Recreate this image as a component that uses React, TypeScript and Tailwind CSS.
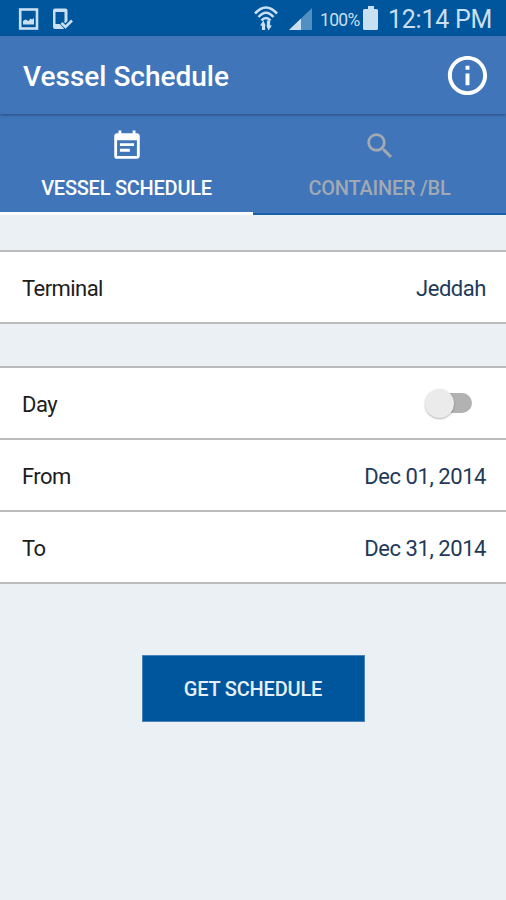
import React, { useState } from "react";
import { MdEventNote, MdInfoOutline, MdSearch } from "react-icons/md";
import clsx from "clsx";

const TABS = [
    { id: "vessel", label: "VESSEL SCHEDULE", icon: MdEventNote },
    { id: "container", label: "CONTAINER /BL", icon: MdSearch },
];

function StatusBar() {
    return (
        <div className="flex h-9 shrink-0 items-center bg-[#00569c] pl-[18px] pr-[14px] text-[#c9dff2]">
            {/* Screenshot */}
            <svg className="mt-px h-[22px] w-[21px] shrink-0" viewBox="0 0 21 22" fill="none">
                <rect x="2.2" y="1.5" width="16.8" height="19" stroke="currentColor" strokeWidth="2.6" />
                <path d="M5 16.500v-3.500l2.500-1.500 3 1.500 2-2.500 1.500 1 2-1.500v6.500z" fill="currentColor" />
            </svg>
            {/* Phone with check mark */}
            <svg className="ml-[13px] mt-px h-[22px] w-[22px] shrink-0" viewBox="0 0 22 22" fill="none">
                <path
                    fillRule="evenodd"
                    d="M3 .5h10.500q2 0 2 2V13l-3 3v5H3q-2 0-2-2V2.500q0-2 2-2zM3.500 4v12h5l4-2.500V4z"
                    fill="currentColor"
                />
                <path d="M9.500 14.500l4 4.500L20 12" stroke="#00569c" strokeWidth="4.500" />
                <path d="M9.500 15l4 4L20 12.500" stroke="currentColor" strokeWidth="2.600" />
            </svg>
            <div className="ml-auto flex items-center">
                {/* Wifi with transfer arrows */}
                <svg className="mr-0.5 h-[26px] w-[26px]" viewBox="0 0 26 26" fill="none" stroke="currentColor">
                    <path d="M2 8.500Q13-3.500 24 8.500" strokeWidth="2.600" />
                    <path d="M5.500 12Q13 3.500 20.500 12" strokeWidth="2.600" />
                    <path d="M8.500 15.500q4.500-5 9 0" strokeWidth="2.600" />
                    <path d="M10.500 25v-6M15.500 15.500v7" strokeWidth="3.200" />
                    <path d="M7 20.500l3.500-5 2 5zM13.500 20.500l2 5 3.500-5z" fill="currentColor" stroke="none" />
                </svg>
                {/* Signal */}
                <svg className="ml-2 mt-0.5 h-[22px] w-6" viewBox="0 0 24 22">
                    <path d="M23 0v22H0z" fill="#528fc2" />
                    <path d="M12 10.500V22H0z" fill="currentColor" />
                </svg>
                <span className="ml-[7px] mt-[3px] w-[43px] text-[17.500px] leading-9 tracking-[-0.7px]">
                    100%
                </span>
                <svg className="mt-[-1px] h-6 w-4" viewBox="0 0 16 24" fill="currentColor">
                    <path d="M5 0h6v3h2.500q1.500 0 1.500 1.500v18q0 1.500-1.500 1.500h-12Q0 24 0 22.500v-18Q0 3 1.500 3H5z" />
                </svg>
                <span className="ml-[9px] mt-1 w-[104px] whitespace-nowrap text-[25px] leading-9 tracking-[-0.25px]">
                    12:14 PM
                </span>
            </div>
        </div>
    );
}

function Row({ label, children }: { label: string; children: React.ReactNode }) {
    return (
        <div className="flex h-[72px] items-center justify-between border-b-2 border-[#b9bbbd] bg-white pl-[22px] pr-5">
            <span className="pt-0.5 text-[22px] tracking-[-0.55px] text-[#1d1d1d]">{label}</span>
            {children}
        </div>
    );
}

function Value({ children }: { children: React.ReactNode }) {
    return <span className="pt-0.5 text-[22px] tracking-[-0.45px] text-[#22395a]">{children}</span>;
}

export default function App() {
    const [tab, setTab] = useState("vessel");
    const [day, setDay] = useState(false);

    return (
        <div className="flex h-[900px] w-full flex-col overflow-hidden bg-[#ebf0f4] font-[Roboto,sans-serif]">
            <StatusBar />

            <header className="relative flex h-[78px] shrink-0 items-center justify-between bg-[#4076b9] pl-[23px] pr-[15px] text-white shadow-[0_1px_3px_rgba(20,40,80,0.6)]">
                <h1 className="mt-1 text-[28px] font-medium">Vessel Schedule</h1>
                <button aria-label="Info">
                    <MdInfoOutline className="size-[47px]" />
                </button>
            </header>

            <nav className="flex h-[101px] shrink-0 bg-[#4076b9]">
                {TABS.map(({ id, label, icon: Icon }) => (
                    <button
                        key={id}
                        onClick={() => setTab(id)}
                        className={clsx(
                            "flex flex-1 flex-col items-center pt-[15px]",
                            tab === id
                                ? "border-b-3 border-white text-white"
                                : "border-b-2 border-[#1762a8] text-[#a2a9b3]"
                        )}
                    >
                        <Icon className="size-[34px]" />
                        <span className="mt-[10px] text-[20px] font-medium leading-[30px] tracking-[-0.25px]">{label}</span>
                    </button>
                ))}
            </nav>

            <main className="flex flex-col">
                <section className="mt-[35px] border-t-2 border-[#b9bbbd]">
                    <Row label="Terminal">
                        <Value>Jeddah</Value>
                    </Row>
                </section>

                <section className="mt-[42px] border-t-2 border-[#b9bbbd]">
                    <Row label="Day">
                        <button
                            role="switch"
                            aria-checked={day}
                            aria-label="Day"
                            onClick={() => setDay(!day)}
                            className="mr-[14px] flex h-5 w-[46px] items-center rounded-full bg-[#b2b2b2]"
                        >
                            <span
                                className={clsx(
                                    "size-[29px] shrink-0 rounded-full bg-[#ebebeb] shadow-[0_1px_2px_rgba(0,0,0,0.3)]",
                                    day ? "ml-[19px]" : "-ml-px"
                                )}
                            />
                        </button>
                    </Row>
                    <Row label="From">
                        <Value>Dec 01, 2014</Value>
                    </Row>
                    <Row label="To">
                        <Value>Dec 31, 2014</Value>
                    </Row>
                </section>

                <button className="mx-auto mt-[71px] h-[67px] w-[223px] border border-[#4a84b8] bg-[#00569c] text-[20px] font-medium tracking-[-0.2px] text-[#e6f0fa]">
                    GET SCHEDULE
                </button>
            </main>
        </div>
    );
}
